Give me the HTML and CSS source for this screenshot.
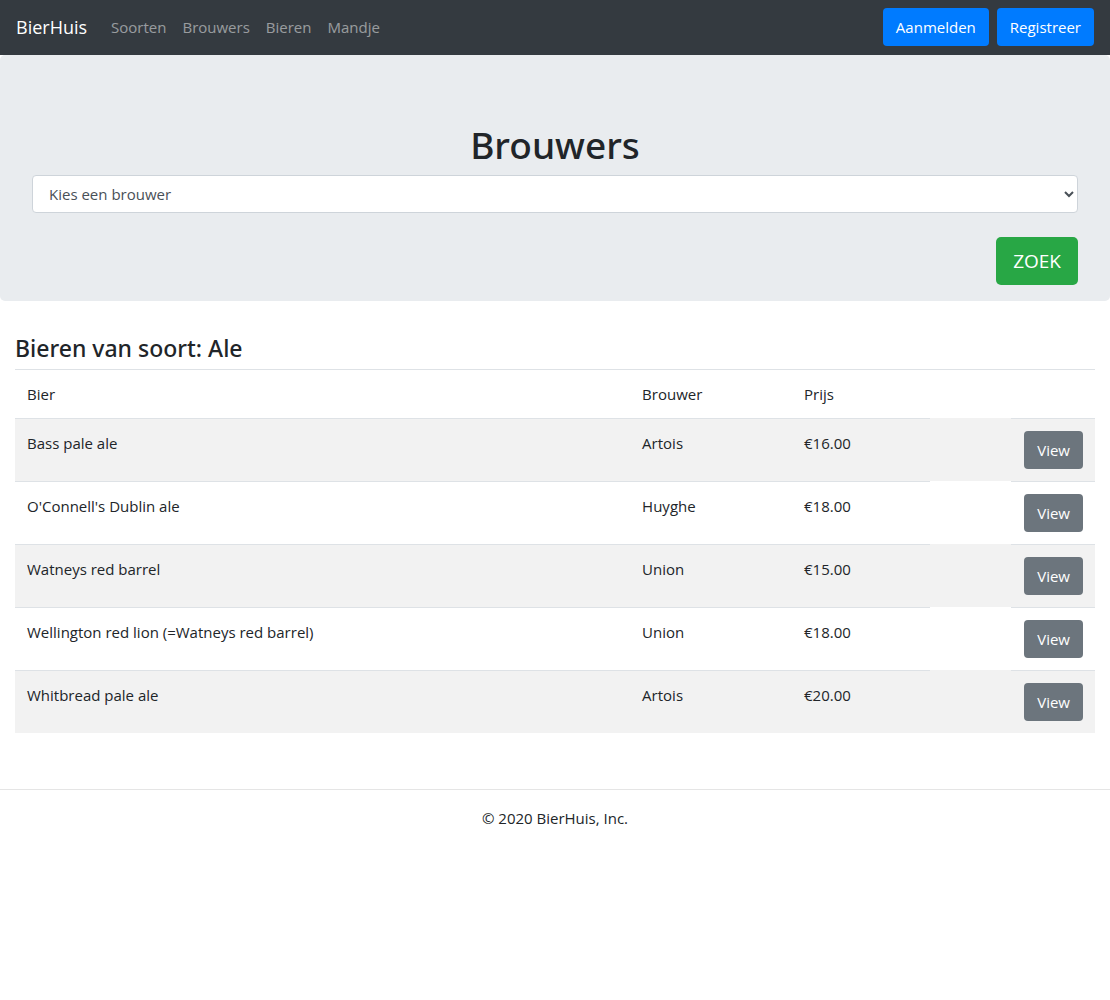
FILE: index.html
```
<!DOCTYPE html>
<html lang="nl">
<head>
<meta charset="utf-8">
<meta name="viewport" content="width=device-width, initial-scale=1">
<title>BierHuis - Brouwers</title>
<link rel="stylesheet" href="styles.css">
</head>
<body>
<nav class="navbar">
  <a class="brand" href="#">BierHuis</a>
  <ul class="nav-links">
    <li><a href="#">Soorten</a></li>
    <li><a href="#">Brouwers</a></li>
    <li><a href="#">Bieren</a></li>
    <li><a href="#">Mandje</a></li>
  </ul>
  <div class="nav-actions">
    <button class="btn btn-primary" type="button">Aanmelden</button>
    <button class="btn btn-primary" type="button">Registreer</button>
  </div>
</nav>
<form class="search">
  <h1><label for="brouwer">Brouwers</label></h1>
  <select id="brouwer" class="select">
    <option>Kies een brouwer</option>
  </select>
  <button class="btn btn-success" type="button">ZOEK</button>
</form>
<main class="content">
  <h2>Bieren van soort: Ale</h2>
  <table class="beers">
    <colgroup>
      <col class="col-beer"><col class="col-brewer"><col class="col-price"><col class="col-spacer"><col class="col-action">
    </colgroup>
    <thead>
      <tr><th>Bier</th><th>Brouwer</th><th>Prijs</th><th></th><th></th></tr>
    </thead>
    <tbody>
      <tr><td>Bass pale ale</td><td>Artois</td><td>€16.00</td><td class="spacer"></td><td class="action"><button class="btn btn-secondary" type="button">View</button></td></tr>
      <tr><td>O'Connell's Dublin ale</td><td>Huyghe</td><td>€18.00</td><td class="spacer"></td><td class="action"><button class="btn btn-secondary" type="button">View</button></td></tr>
      <tr><td>Watneys red barrel</td><td>Union</td><td>€15.00</td><td class="spacer"></td><td class="action"><button class="btn btn-secondary" type="button">View</button></td></tr>
      <tr><td>Wellington red lion (=Watneys red barrel)</td><td>Union</td><td>€18.00</td><td class="spacer"></td><td class="action"><button class="btn btn-secondary" type="button">View</button></td></tr>
      <tr><td>Whitbread pale ale</td><td>Artois</td><td>€20.00</td><td class="spacer"></td><td class="action"><button class="btn btn-secondary" type="button">View</button></td></tr>
    </tbody>
  </table>
</main>
<footer class="footer">© 2020 BierHuis, Inc.</footer>
</body>
</html>
```
FILE: styles.css
```
*, *::before, *::after { box-sizing: border-box; }

body {
  margin: 0;
  font-family: "Segoe UI", "Open Sans", sans-serif;
  font-size: 15px;
  font-weight: 400;
  line-height: 24px;
  color: #212529;
  background: #fff;
}

.navbar {
  display: flex;
  align-items: flex-start;
  min-height: 55px;
  padding: 8px 16px;
  background: #343a40;
  line-height: 38px;
}

.brand {
  margin-right: 16px;
  font-size: 18px;
  color: #fff;
  text-decoration: none;
}

.nav-links {
  display: flex;
  margin: 0;
  padding: 0;
  list-style: none;
}

.nav-links a {
  padding: 8px;
  color: rgba(255, 255, 255, 0.5);
  text-decoration: none;
}

.nav-actions {
  display: flex;
  gap: 8px;
  margin-left: auto;
}

.btn {
  padding: 6px 12px;
  border: 1px solid transparent;
  border-radius: 4px;
  font-family: inherit;
  font-size: 15px;
  font-weight: 400;
  line-height: 24px;
  color: #fff;
  cursor: pointer;
}

.btn-primary { background: #007bff; }
.btn-secondary { background: #6c757d; }

.btn-success {
  align-self: flex-end;
  margin-top: 24px;
  padding: 8px 16px;
  border-radius: 5px;
  background: #28a745;
  font-size: 19px;
  line-height: 30px;
}

.search {
  display: flex;
  flex-direction: column;
  padding: 64px 32px 16px;
  border-radius: 5px;
  background: #e9ecef;
}

h1, h2 {
  margin: 0 0 4px;
  font-family: "Segoe UI", "Noto Sans", "Open Sans", sans-serif;
  font-weight: 500;
}

h1 {
  font-size: 37px;
  line-height: 52px;
  text-align: center;
}

.select {
  width: 100%;
  height: 38px;
  padding: 6px 12px;
  border: 1px solid #ced4da;
  border-radius: 4px;
  background: #fff;
  font: inherit;
  color: #495057;
}

.content { padding: 31px 15px 0; }

h2 {
  font-size: 23px;
  line-height: 33px;
}

.beers {
  width: 100%;
  table-layout: fixed;
  border-collapse: separate;
  border-spacing: 0;
}

.col-beer { width: 57%; }
.col-brewer { width: 15%; }
.col-price { width: 138px; }
.col-spacer { width: 81px; }
.col-action { width: 84px; }

.beers th, .beers td {
  padding: 12px;
  border-top: 1px solid #dee2e6;
  font-weight: 400;
  text-align: left;
  vertical-align: top;
}

.beers tbody tr:nth-child(odd) { background: #f2f2f2; }
.beers .spacer { border-top: 0; }
.beers .action { text-align: right; }
.action .btn { display: block; margin-left: auto; }

.footer {
  margin-top: 56px;
  padding: 16px;
  border-top: 1px solid #e5e5e5;
  text-align: center;
}
```
